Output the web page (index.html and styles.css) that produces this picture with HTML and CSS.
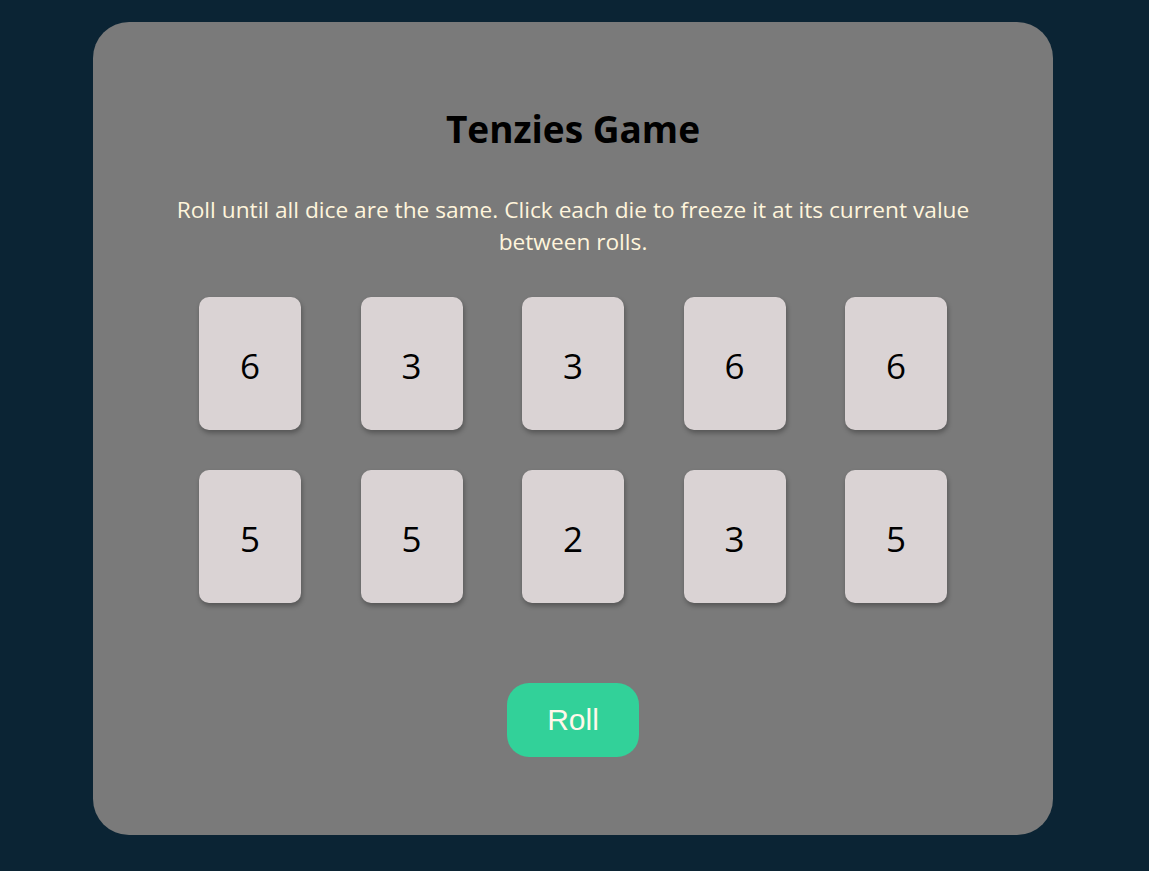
FILE: index.html
```html
<!DOCTYPE html>
<html lang="en">
<head>
<meta charset="utf-8">
<title>Tenzies</title>
<link rel="stylesheet" href="styles.css">
</head>
<body>
<main class="board">
  <h1 class="title">Tenzies Game</h1>
  <p class="instructions">Roll until all dice are the same. Click each die to freeze it at its current value between rolls.</p>
  <div class="dice">
    <button class="die">6</button>
    <button class="die">3</button>
    <button class="die">3</button>
    <button class="die">6</button>
    <button class="die">6</button>
    <button class="die">5</button>
    <button class="die">5</button>
    <button class="die">2</button>
    <button class="die">3</button>
    <button class="die">5</button>
  </div>
  <button class="roll">Roll</button>
</main>
</body>
</html>
```
FILE: styles.css
```css
* { box-sizing: border-box; }
html, body { margin: 0; padding: 0; }
body {
  background: #0b2434;
  font-family: "Open Sans", "Noto Sans", sans-serif;
  min-height: 871px;
  padding: 22px 3px 0 0;
}
.board {
  width: 960px;
  height: 813px;
  margin: 0 auto;
  background: #7a7a7a;
  border-radius: 36px;
  display: flex;
  flex-direction: column;
  align-items: center;
  padding-top: 81px;
}
.title {
  margin: 0;
  font-size: 37px;
  line-height: 52px;
  font-weight: 700;
  color: #000;
}
.instructions {
  margin: 39px 0 0;
  width: 860px;
  text-align: center;
  font-size: 22.7px;
  line-height: 32px;
  color: #fff5dc;
}
.dice {
  margin-top: 39px;
  display: grid;
  grid-template-columns: repeat(5, 102px);
  column-gap: 59.5px;
  row-gap: 40px;
}
.die {
  width: 102px;
  height: 133px;
  border: none;
  border-radius: 10px;
  background: #dad3d4;
  box-shadow: 1px 3px 5px rgba(0,0,0,0.3);
  font-family: inherit;
  font-size: 35px;
  color: #000;
  padding: 3px 0 0;
}
.roll {
  margin-top: 80px;
  width: 132px;
  height: 74px;
  border: none;
  border-radius: 22px;
  background: #32d199;
  color: #fff8ea;
  font-family: "Liberation Sans", Arial, sans-serif;
  font-size: 30px;
  padding: 0;
}
```
